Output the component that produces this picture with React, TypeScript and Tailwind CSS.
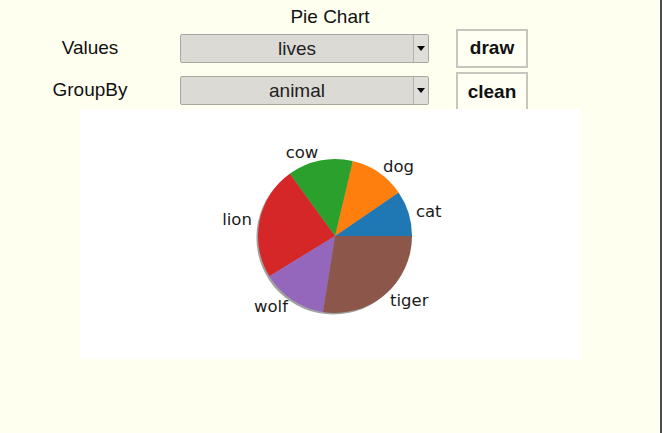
const font = { fontFamily: '"Liberation Sans", Arial, sans-serif' }

// wedge boundaries in degrees, counter-clockwise from east (matplotlib order)
const slices = [
  { label: 'cat', color: '#1f77b4', from: 0, to: 34.3 },
  { label: 'dog', color: '#ff7f0e', from: 34.3, to: 76.7 },
  { label: 'cow', color: '#2ca02c', from: 76.7, to: 126 },
  { label: 'lion', color: '#d62728', from: 126, to: 211.6 },
  { label: 'wolf', color: '#9467bd', from: 211.6, to: 261 },
  { label: 'tiger', color: '#8c564b', from: 261, to: 360 },
]

const CX = 255
const CY = 127
const R = 77

function pt(deg: number, r: number) {
  const a = (deg * Math.PI) / 180
  return [CX + r * Math.cos(a), CY - r * Math.sin(a)]
}

function wedge(from: number, to: number) {
  const [x1, y1] = pt(from, R)
  const [x2, y2] = pt(to, R)
  const large = to - from > 180 ? 1 : 0
  return `M${CX},${CY} L${x1},${y1} A${R},${R} 0 ${large} 0 ${x2},${y2} Z`
}

function Pie() {
  return (
    <svg width={500} height={250} viewBox="0 0 500 250">
      <circle cx={CX - 1.6} cy={CY + 1.6} r={R} fill="#555" opacity={0.55} />
      {slices.map((s) => (
        <path key={s.label} d={wedge(s.from, s.to)} fill={s.color} />
      ))}
      {slices.map((s) => {
        const mid = (s.from + s.to) / 2
        const [x, y] = pt(mid, R * 1.1)
        return (
          <text
            key={s.label}
            x={x}
            y={y}
            textAnchor={x > CX ? 'start' : 'end'}
            dominantBaseline="central"
            fontFamily='"DejaVu Sans", sans-serif'
            fontSize={16.5}
            fill="#1a1a1a"
          >
            {s.label}
          </text>
        )
      })}
    </svg>
  )
}

function Select({ value }: { value: string }) {
  return (
    <div className="flex h-[29px] w-[249px] rounded-[2px] border border-[#a8a8a2] bg-[#dcdad5]">
      <div className="flex flex-1 items-center justify-center text-[19px] leading-none text-[#222]">
        {value}
      </div>
      <div className="flex w-[15px] items-center justify-center border-l border-[#b4b2ad] bg-[#e0ded9]">
        <svg width="8" height="5" viewBox="0 0 8 5">
          <path d="M0 0 H8 L4 5 Z" fill="#000" />
        </svg>
      </div>
    </div>
  )
}

export default function App() {
  return (
    <div className="h-[433px] w-[662px] overflow-hidden border-r-2 border-[#4d4d4d] bg-[#fffff0] text-[#111]" style={font}>
      <div className="pt-[6px] text-center text-[19px] leading-[22px]">Pie Chart</div>

      <div className="mt-[1px] flex h-[39px] items-center">
        <div className="w-[180px] text-center text-[19px]">Values</div>
        <Select value="lives" />
        <button className="ml-[27px] h-[39px] w-[72px] border-2 border-[#c6c6be] bg-[#fffff4] text-[19px] font-bold">
          draw
        </button>
      </div>

      <div className="mt-[4px] flex h-[37px] items-center">
        <div className="w-[180px] text-center text-[19px]">GroupBy</div>
        <Select value="animal" />
        <button className="ml-[27px] h-[37px] w-[72px] border-2 border-b-0 border-[#c6c6be] bg-[#fffff4] pt-[2px] text-[19px] font-bold">
          clean
        </button>
      </div>

      <div className="ml-[80px] h-[250px] w-[500px] bg-white">
        <Pie />
      </div>
    </div>
  )
}
